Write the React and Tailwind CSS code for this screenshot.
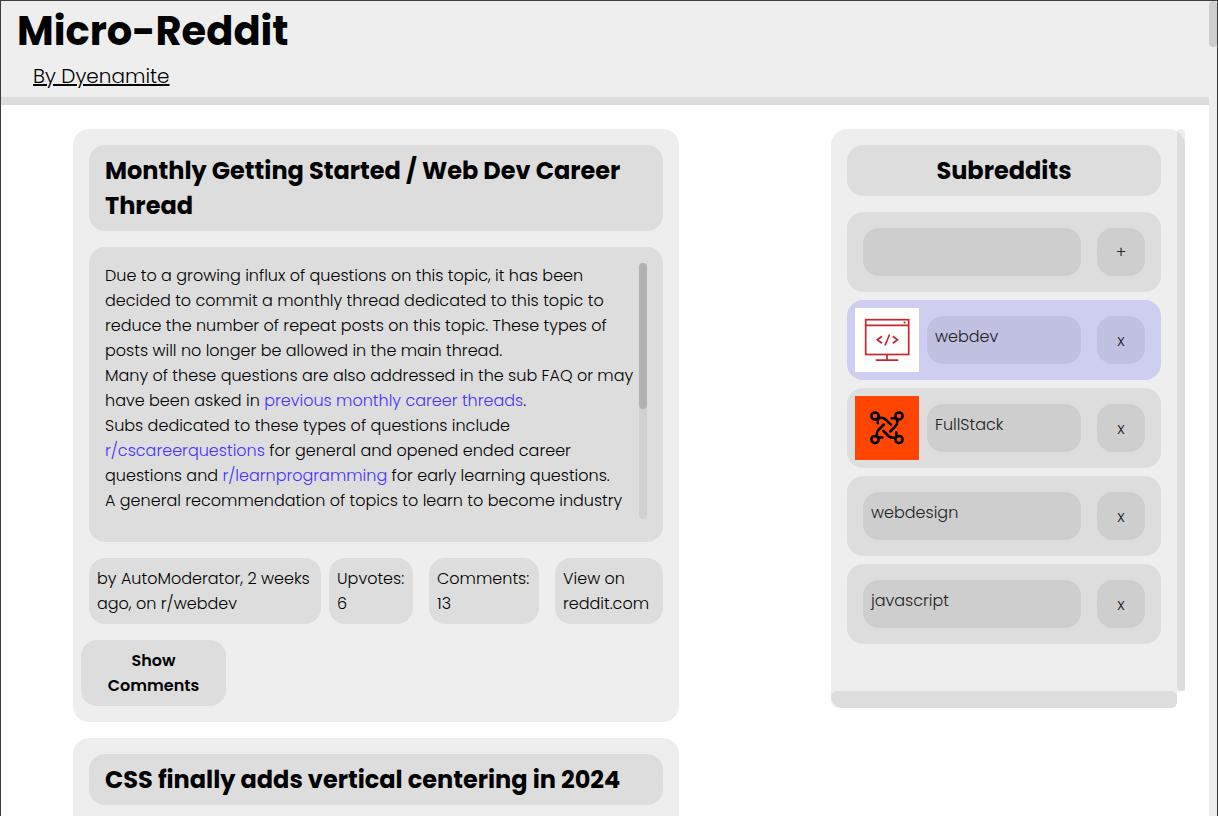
import React from "react";

function MonitorLogo() {
  return (
    <svg viewBox="0 0 64 64" className="size-16 shrink-0 bg-white" fill="none" stroke="#c9272d" strokeWidth="1.7" aria-hidden="true">
      <rect x="10.700" y="11.700" width="43" height="34.800" />
      <path d="M10.700 17.400h43M32 46.500v5.500M20.700 52.200h22.600" />
      <path d="M27 28.200l-4.700 3.500 4.700 3.500M34.600 26.500l-4.600 11M37.800 28.200l4.700 3.500-4.700 3.500" />
      <circle cx="49.600" cy="14.500" r="1.100" fill="#c9272d" stroke="none" />
    </svg>
  );
}

function KnotLogo() {
  return (
    <svg viewBox="0 0 64 64" className="size-16 shrink-0 bg-[#ff4500]" fill="none" stroke="#000" strokeWidth="2.500" strokeLinecap="round" strokeLinejoin="round" aria-hidden="true">
      <circle cx="20" cy="20" r="3.600" />
      <circle cx="44" cy="20" r="3.600" />
      <circle cx="20" cy="43.500" r="3.600" />
      <circle cx="44" cy="43.500" r="3.600" />
      <path d="M22.800 27.200V22.800C25.500 21.300 28.300 21.500 30.500 23.500L36 28.700" />
      <path d="M36.600 22.200H41.200C42.800 25 42.500 28 40.500 30.100L35.200 35.500" />
      <path d="M41.300 36.300V40.800C38.500 42.400 35.700 42 33.500 40L28.300 34.800" />
      <path d="M27.500 41.500H22.800C21.200 38.500 21.500 36 23.500 33.800L28.800 28.500" />
    </svg>
  );
}

const pill = "rounded-2xl bg-[#dddddd]";

function PostTitle({ children }) {
  return <h2 className={`${pill} px-4 py-2 text-[24px] leading-[35px] font-bold`}>{children}</h2>;
}

function Post({ title, children }) {
  return (
    <article className="flex flex-col gap-4 rounded-2xl bg-[#eeeeee] p-4">
      <PostTitle>{title}</PostTitle>
      {children}
    </article>
  );
}

const linkClass = "text-[#4433ff]";

function PostBody({ children }) {
  return (
    <div className={`${pill} flex px-4 pt-4 pb-[23px]`}>
      <div className="h-64 min-w-0 flex-1 overflow-hidden whitespace-nowrap">{children}</div>
      <div className="w-2 rounded-full bg-[#d0d0d0]" aria-hidden="true">
        <div className="h-[146px] rounded-full bg-[#b1b1b1]" />
      </div>
    </div>
  );
}

function Subreddit({ name, logo, active }) {
  const row = active ? "bg-[#cecef0]" : "bg-[#dddddd]";
  const box = active ? "bg-[#c0c0e0]" : "bg-[#cecece]";
  return (
    <li className={`flex h-20 items-center rounded-2xl pr-4 text-[#222222] ${row} ${logo ? "gap-2 pl-2" : "pl-4"}`}>
      {logo}
      <button type="button" className={`flex h-12 min-w-0 flex-1 items-start rounded-2xl p-2 text-left ${box}`}>{name}</button>
      <button type="button" aria-label={`Remove ${name}`} className={`size-12 shrink-0 rounded-2xl ${box} ${logo ? "ml-2" : "ml-4"}`}>x</button>
    </li>
  );
}

function Sidebar() {
  return (
    <aside className="w-[354px] shrink-0">
      <div className="flex rounded-t-2xl bg-[#eeeeee]">
        <div className="min-w-0 flex-1 px-4 pt-4 pb-[47px]">
          <h2 className={`${pill} py-2 text-center text-[24px] leading-[35px] font-bold`}>Subreddits</h2>
          <form className={`${pill} mt-4 flex h-20 items-center gap-4 px-4`} onSubmit={(e) => e.preventDefault()}>
            <input type="text" aria-label="Subreddit name" className="h-12 min-w-0 flex-1 rounded-2xl bg-[#cecece] p-2 outline-none" />
            <button type="submit" aria-label="Add subreddit" className="size-12 shrink-0 rounded-2xl bg-[#cecece] text-[#222222]">+</button>
          </form>
          <ul className="mt-2 flex flex-col gap-2">
            <Subreddit name="webdev" logo={<MonitorLogo />} active />
            <Subreddit name="FullStack" logo={<KnotLogo />} />
            <Subreddit name="webdesign" />
            <Subreddit name="javascript" />
          </ul>
        </div>
        <div className="w-2 rounded-full bg-black/7" aria-hidden="true" />
      </div>
      <div className="mr-2 rounded-b-lg bg-[#eeeeee]" aria-hidden="true">
        <div className="h-[17px] rounded-lg rounded-bl-2xl bg-[#dddddd]" />
      </div>
    </aside>
  );
}

export default function App() {
  return (
    <div className="flex h-screen overflow-hidden border-x border-t border-[#3c3a3d] bg-white font-['Poppins','Inter',sans-serif] text-[16px] leading-[25px] font-light text-black">
      <div className="min-w-0 flex-1">
        <header className="border-b-8 border-[#dddddd] bg-[#eeeeee] px-4 pb-[6px]">
          <h1 className="text-[40px] leading-[60px] font-bold">Micro-Reddit</h1>
          <a href="#author" className="ml-4 inline-block align-top text-[20px] leading-[30px] underline">By Dyenamite</a>
        </header>
        <main className="flex items-start gap-[152px] pt-6 pr-6 pl-[72px]">
          <div className="flex min-w-0 flex-1 flex-col gap-4">
            <Post title={<>Monthly Getting Started / Web Dev Career<br />Thread</>}>
              <PostBody>
                <p>
                  Due to a growing influx of questions on this topic, it has been
                  <br />
                  decided to commit a monthly thread dedicated to this topic to
                  <br />
                  reduce the number of repeat posts on this topic. These types of
                  <br />
                  posts will no longer be allowed in the main thread.
                </p>
                <p>
                  Many of these questions are also addressed in the sub FAQ or may
                  <br />
                  have been asked in <a href="#threads" className={linkClass}>previous monthly career threads</a>.
                </p>
                <p>
                  Subs dedicated to these types of questions include
                  <br />
                  <a href="#cscareerquestions" className={linkClass}>r/cscareerquestions</a> for general and opened ended career
                  <br />
                  questions and <a href="#learnprogramming" className={linkClass}>r/learnprogramming</a> for early learning questions.
                </p>
                <p>A general recommendation of topics to learn to become industry</p>
              </PostBody>
              <div className="flex gap-4 whitespace-nowrap">
                <div className="flex flex-1 gap-2">
                  <p className={`${pill} flex-1 p-2`}>by AutoModerator, 2 weeks<br />ago, on r/webdev</p>
                  <p className={`${pill} w-[84px] p-2`}>Upvotes:<br />6</p>
                </div>
                <p className={`${pill} w-[110px] p-2`}>Comments:<br />13</p>
                <a href="#reddit" className={`${pill} w-[108px] p-2`}>View on<br />reddit.com</a>
              </div>
              <button type="button" className={`${pill} -ml-2 w-[145px] p-2 font-semibold`}>Show<br />Comments</button>
            </Post>
            <Post title="CSS finally adds vertical centering in 2024">
              <div className={`${pill} h-64`} />
            </Post>
          </div>
          <Sidebar />
        </main>
      </div>
      <div className="w-2 bg-[#eeeeee]" aria-hidden="true">
        <div className="h-[46px] rounded-full bg-[#cecece]" />
      </div>
    </div>
  );
}
